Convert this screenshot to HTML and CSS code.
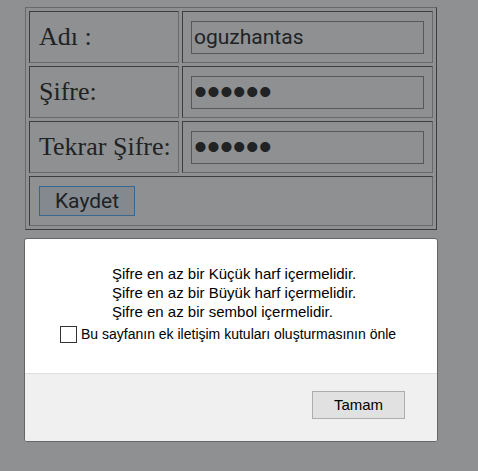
FILE: index.html
```html
<!DOCTYPE html>
<html lang="tr">
<head>
  <meta charset="UTF-8" />
  <meta name="viewport" content="width=device-width, initial-scale=1.0" />
  <title>Kayıt Formu</title>
  <link rel="stylesheet" href="styles.css">
</head>
<body>
  <form>
    <table class="form-table">
      <tr>
        <td class="label-cell"><label for="adi">Adı :</label></td>
        <td><input class="field" type="text" id="adi" value="oguzhantas"></td>
      </tr>
      <tr>
        <td class="label-cell"><label for="sifre">Şifre:</label></td>
        <td><input class="field password" type="password" id="sifre" value="abc123"></td>
      </tr>
      <tr>
        <td class="label-cell"><label for="tekrar">Tekrar Şifre:</label></td>
        <td><input class="field password" type="password" id="tekrar" value="abc123"></td>
      </tr>
      <tr>
        <td class="save-cell" colspan="2"><button class="save" type="button">Kaydet</button></td>
      </tr>
    </table>
  </form>

  <div class="dialog" role="alertdialog" aria-labelledby="mesaj">
    <div class="dialog-body">
      <p class="message" id="mesaj">
        Şifre en az bir Küçük harf içermelidir.<br>
        Şifre en az bir Büyük harf içermelidir.<br>
        Şifre en az bir sembol içermelidir.
      </p>
      <label class="prevent">
        <input type="checkbox">
        Bu sayfanın ek iletişim kutuları oluşturmasının önle
      </label>
    </div>
    <div class="dialog-footer">
      <button class="ok" type="button">Tamam</button>
    </div>
  </div>
</body>
</html>
```
FILE: styles.css
```css
* { box-sizing: border-box; }
body {
  margin: 0;
  padding: 7px 40px 0 24px;
  background: #8f9091;
  color: #202224;
  font-family: "Liberation Serif", serif;
}

/* form */
form {
  padding: 0 1px;
}
.form-table {
  width: 100%;
  border: 1px solid;
  border-color: #68696a #3c3d3e #3c3d3e #68696a;
  border-collapse: separate;
  border-spacing: 3px;
}
td {
  height: 52px;
  padding: 8px;
  border: 1px solid;
  border-color: #3c3d3e #68696a #68696a #3c3d3e;
  font-size: 26px;
  line-height: 30px;
}
.label-cell {
  width: 150px;
  padding: 8px 0 8px 9px;
  white-space: nowrap;
}
.field {
  display: block;
  width: 100%;
  height: 33px;
  padding: 0 2px;
  border: 1px solid #56585a;
  background: transparent;
  color: #202224;
  font-family: Roboto, sans-serif;
  font-size: 21px;
  outline: none;
}
.password {
  font-family: "Liberation Sans", sans-serif;
  font-size: 37px;
}
.save-cell {
  height: 50px;
}
.save {
  display: block;
  width: 96px;
  height: 30px;
  margin-left: 1px;
  padding: 0;
  border: 1px solid #366791;
  background: #83898f;
  color: #202224;
  font-family: Roboto, sans-serif;
  font-size: 21px;
  line-height: 28px;
}

/* dialog */
.dialog {
  margin-top: 8px;
  border: 1px solid #646566;
  border-radius: 3px;
  background: #fff;
  color: #000;
  font-family: "Liberation Sans", sans-serif;
  font-size: 15px;
  overflow: hidden;
}
.dialog-body {
  padding: 25px 30px 29px 35px;
}
.message {
  margin: 0 0 4px 52px;
  line-height: 19px;
}
.prevent {
  display: flex;
  align-items: center;
  gap: 4px;
  font-size: 14px;
  line-height: 19px;
  white-space: nowrap;
}
.prevent input {
  appearance: none;
  flex: none;
  width: 17px;
  height: 17px;
  margin: 0;
  border: 1px solid #333;
  background: #fff;
}
.prevent input:checked {
  background: #333;
}
.dialog-footer {
  display: flex;
  justify-content: flex-end;
  padding: 17px 32px 22px;
  border-top: 1px solid #dfdfdf;
  background: #f0f0f0;
}
.ok {
  width: 93px;
  height: 28px;
  padding: 0 0 2px;
  border: 1px solid #adadad;
  background: #e1e1e1;
  color: #000;
  font-family: "Liberation Sans", sans-serif;
  font-size: 15px;
}
```
